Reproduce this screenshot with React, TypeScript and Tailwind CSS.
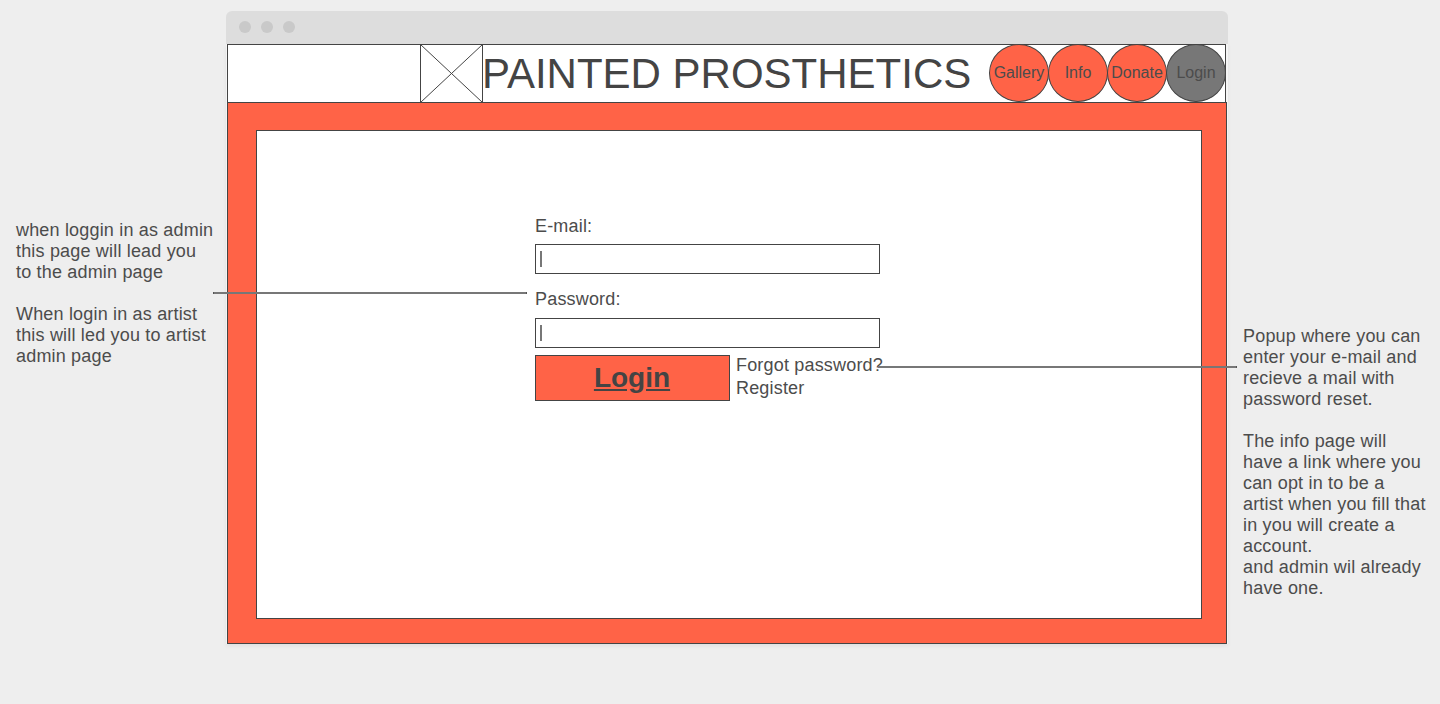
import React from "react";

const NAV = [
  { label: "Gallery", fill: "bg-[#ff6347]" },
  { label: "Info", fill: "bg-[#ff6347]" },
  { label: "Donate", fill: "bg-[#ff6347]" },
  { label: "Login", fill: "bg-[#777777]" },
];

function Note({ lines, className }: { lines: string[]; className: string }) {
  return (
    <aside className={`text-[18px] leading-[21px] tracking-[0.18px] whitespace-nowrap text-[#4c4c4c] ${className}`}>
      {lines.map((line, i) => (
        <p key={i} className="h-[21px]">{line}</p>
      ))}
    </aside>
  );
}

function TitleBar() {
  return (
    <div className="flex h-[33px] items-start gap-[10px] rounded-t-[6px] bg-[#dddddd] pt-[10px] pl-[13px]">
      <span className="size-3 rounded-full bg-[#c9c9c9]" />
      <span className="size-3 rounded-full bg-[#c9c9c9]" />
      <span className="size-3 rounded-full bg-[#c9c9c9]" />
    </div>
  );
}

function Header() {
  return (
    <header className="ml-px flex h-[59px] w-[999px] bg-white shadow-[inset_0_0_0_1px_#444444]">
      <svg className="ml-[193px] h-[59px] w-[63px] shrink-0" viewBox="0 0 63 59" fill="none" stroke="#444444">
        <rect x="0.5" y="0.5" width="62" height="58" />
        <path d="M0.5 0.5L62.5 58.5M62.5 0.5L0.5 58.5" />
      </svg>
      <h1 className="-ml-px w-[507px] shrink-0 text-[42px] leading-[59px] whitespace-nowrap">PAINTED PROSTHETICS</h1>
      <nav className="flex text-[#4c4c4c]">
        {NAV.map((item) => (
          <a
            key={item.label}
            className={`-mr-px flex h-[58px] w-[60px] shrink-0 items-center justify-center rounded-[50%] border border-[#444444] text-[16px] ${item.fill}`}
          >
            {item.label}
          </a>
        ))}
      </nav>
    </header>
  );
}

function Field({ label, className }: { label: string; className: string }) {
  return (
    <label className={`block ${className}`}>
      <span className="block text-[18px] leading-[21px] tracking-[0.18px] text-[#4c4c4c]">{label}</span>
      <span className="mt-[8px] flex h-[30px] w-[345px] items-start border border-[#444444] bg-white pt-[6px] pl-[4px]">
        <span className="h-4 w-0.5 bg-[#777777]" />
      </span>
    </label>
  );
}

function LoginForm() {
  return (
    <form className="ml-[278px] flex flex-col pt-[85px]">
      <Field label="E-mail:" className="-mb-px [&>span:last-child]:mt-[7px]" />
      <Field label="Password:" className="mt-[16px]" />
      <div className="mt-[7px] flex">
        <button
          type="button"
          className="h-[46px] w-[195px] border border-[#444444] bg-[#ff6347] pr-px text-[28px] leading-[44px] font-bold underline"
        >
          Login
        </button>
        <div className="-mt-px ml-[6px] text-[18px] leading-[23px] tracking-[0.18px] whitespace-nowrap text-[#4c4c4c]">
          <p>Forgot password?</p>
          <p>Register</p>
        </div>
      </div>
    </form>
  );
}

export default function App() {
  return (
    <div className="relative flex h-[704px] w-[1440px] overflow-hidden bg-[#eeeeee] font-['Liberation_Sans',Arial,sans-serif] text-[#444444]">
      <Note
        className="w-[226px] shrink-0 pt-[220px] pl-4"
        lines={[
          "when loggin in as admin",
          "this page will lead you",
          "to the admin page",
          "",
          "When login in as artist",
          "this will led you to artist",
          "admin page",
        ]}
      />
      <main className="mt-[11px] h-[633px] w-[1002px] shrink-0">
        <TitleBar />
        <div className="h-[600px] bg-[#f4f4f4] shadow-[0_2px_4px_rgba(0,0,0,0.06)]">
          <Header />
          <section className="-mt-px ml-px h-[542px] w-[1000px] border border-[#444444] bg-[#ff6347] pt-[27px] pl-[28px]">
            <div className="h-[489px] w-[946px] border border-[#444444] bg-white">
              <LoginForm />
            </div>
          </section>
        </div>
      </main>
      <Note
        className="pt-[326px] pl-[15px]"
        lines={[
          "Popup where you can",
          "enter your e-mail and",
          "recieve a mail with",
          "password reset.",
          "",
          "The info page will",
          "have a link where you",
          "can opt in to be a",
          "artist when you fill that",
          "in you will create a",
          "account.",
          "and admin wil already",
          "have one.",
        ]}
      />
      <div className="absolute top-[292px] left-[213px] h-0.5 w-[314px] border-x border-[#555555] bg-[#777777]" />
      <div className="absolute top-[366px] left-[878px] h-0.5 w-[359px] border-r border-[#555555] bg-[#777777]" />
    </div>
  );
}
